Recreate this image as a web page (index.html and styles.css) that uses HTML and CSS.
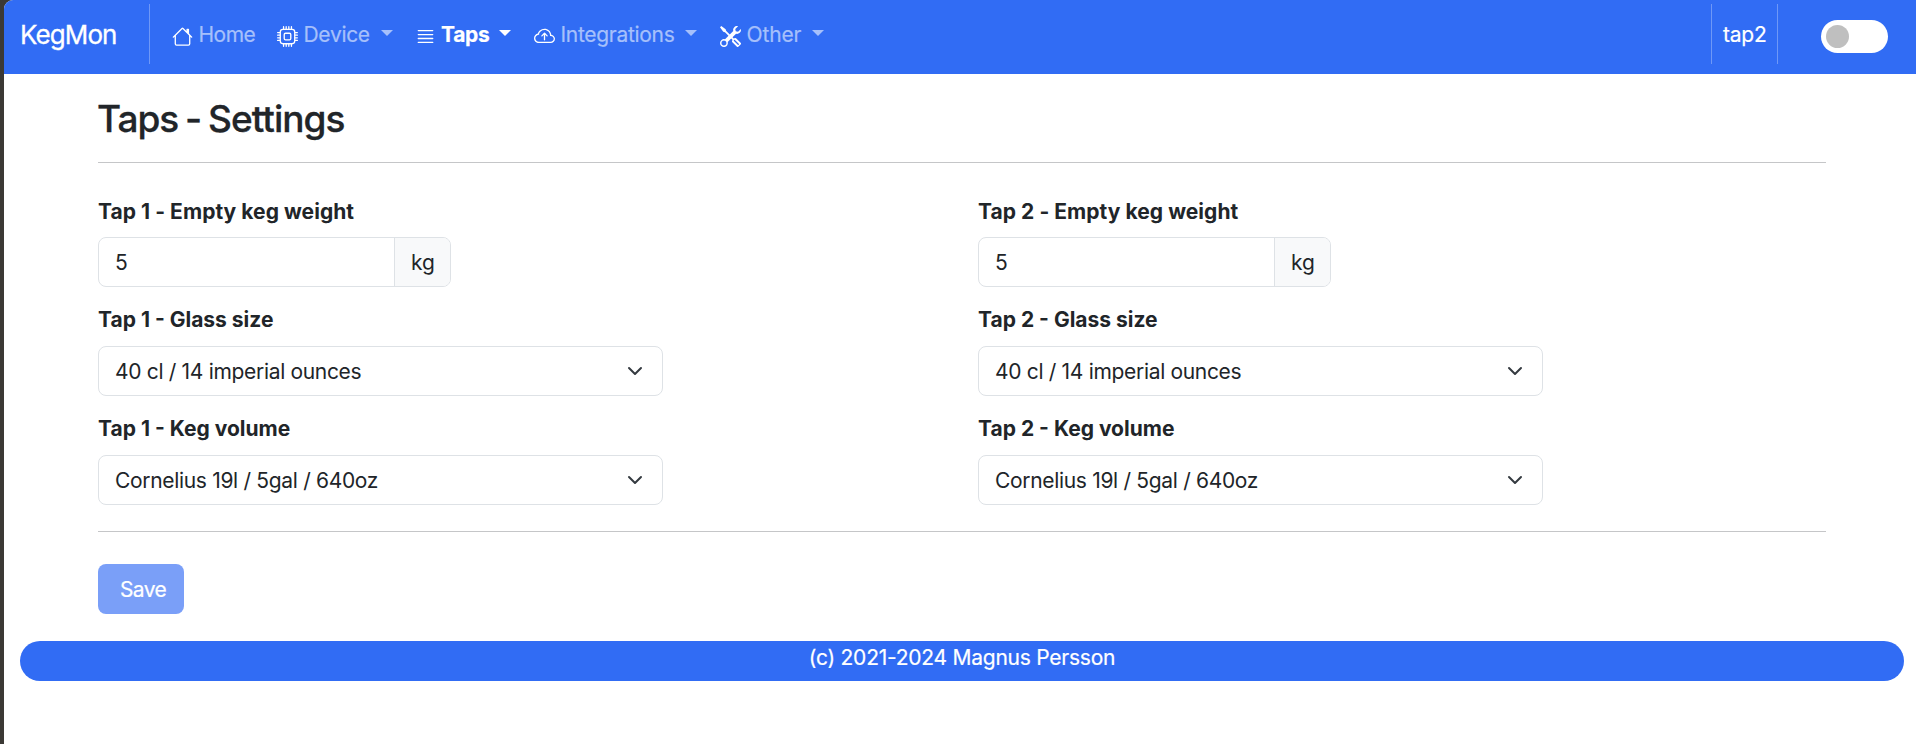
FILE: index.html
```html
<!DOCTYPE html>
<html lang="en">
<head>
<meta charset="utf-8">
<title>KegMon</title>
<link rel="stylesheet" href="styles.css">
</head>
<body>
<div class="page">
  <nav class="navbar">
    <a class="brand">KegMon</a>
    <div class="rule"></div>
    <a class="link home">
      <svg class="icon" viewBox="0 0 16 16"><path d="M8.707 1.5a1 1 0 0 0-1.414 0L.646 8.146a.5.5 0 0 0 .708.708L2 8.207V13.5A1.5 1.5 0 0 0 3.5 15h9a1.5 1.5 0 0 0 1.5-1.5V8.207l.646.647a.5.5 0 0 0 .708-.708L13 5.793V2.5a.5.5 0 0 0-.5-.5h-1a.5.5 0 0 0-.5.5v1.293zM13 7.207V13.5a.5.5 0 0 1-.5.5h-9a.5.5 0 0 1-.5-.5V7.207l5-5z"/></svg>
      <span class="text">Home</span>
    </a>
    <a class="link device">
      <svg class="icon" viewBox="0 0 16 16"><path d="M5 0a.5.5 0 0 1 .5.5V2h1V.5a.5.5 0 0 1 1 0V2h1V.5a.5.5 0 0 1 1 0V2h1V.5a.5.5 0 0 1 1 0V2A2.5 2.5 0 0 1 14 4.5h1.5a.5.5 0 0 1 0 1H14v1h1.5a.5.5 0 0 1 0 1H14v1h1.5a.5.5 0 0 1 0 1H14v1h1.5a.5.5 0 0 1 0 1H14a2.5 2.5 0 0 1-2.5 2.5v1.5a.5.5 0 0 1-1 0V14h-1v1.5a.5.5 0 0 1-1 0V14h-1v1.5a.5.5 0 0 1-1 0V14h-1v1.5a.5.5 0 0 1-1 0V14A2.5 2.5 0 0 1 2 11.5H.5a.5.5 0 0 1 0-1H2v-1H.5a.5.5 0 0 1 0-1H2v-1H.5a.5.5 0 0 1 0-1H2v-1H.5a.5.5 0 0 1 0-1H2A2.5 2.5 0 0 1 4.5 2V.5A.5.5 0 0 1 5 0m-.5 3A1.5 1.5 0 0 0 3 4.5v7A1.5 1.5 0 0 0 4.5 13h7a1.5 1.5 0 0 0 1.5-1.5v-7A1.5 1.5 0 0 0 11.5 3zM5 6.5A1.5 1.5 0 0 1 6.5 5h3A1.5 1.5 0 0 1 11 6.5v3A1.5 1.5 0 0 1 9.5 11h-3A1.5 1.5 0 0 1 5 9.500zM6.500 6a.5.5 0 0 0-.5.5v3a.5.5 0 0 0 .5.5h3a.5.5 0 0 0 .5-.5v-3a.5.5 0 0 0-.5-.5z"/></svg>
      <span class="text">Device</span><i class="caret"></i>
    </a>
    <a class="link taps active">
      <svg class="icon" viewBox="0 0 16 16"><path d="M2 12.5a.5.5 0 0 1 .5-.5h11a.5.5 0 0 1 0 1h-11a.5.5 0 0 1-.5-.5m0-3a.5.5 0 0 1 .5-.5h11a.5.5 0 0 1 0 1h-11a.5.5 0 0 1-.5-.5m0-3a.5.5 0 0 1 .5-.5h11a.5.5 0 0 1 0 1h-11a.5.5 0 0 1-.5-.5m0-3a.5.5 0 0 1 .5-.5h11a.5.5 0 0 1 0 1h-11a.5.5 0 0 1-.5-.5"/></svg>
      <span class="text">Taps</span><i class="caret"></i>
    </a>
    <a class="link integrations">
      <svg class="icon" viewBox="0 0 16 16"><path fill-rule="evenodd" d="M7.646 5.146a.5.5 0 0 1 .708 0l2 2a.5.5 0 0 1-.708.708L8.500 6.707V10.500a.5.5 0 0 1-1 0V6.707L6.354 7.854a.5.5 0 1 1-.708-.708z"/><path d="M4.406 3.342A5.530 5.530 0 0 1 8 2c2.690 0 4.923 2 5.166 4.579C14.758 6.804 16 8.137 16 9.773 16 11.569 14.502 13 12.687 13H3.781C1.708 13 0 11.366 0 9.318c0-1.763 1.266-3.223 2.942-3.593.143-.863.698-1.723 1.464-2.383m.653.757c-.757.653-1.153 1.440-1.153 2.056v.448l-.445.049C2.064 6.805 1 7.952 1 9.318 1 10.785 2.230 12 3.781 12h8.906C13.980 12 15 10.988 15 9.773c0-1.216-1.020-2.228-2.313-2.228h-.5v-.5C12.188 4.825 10.328 3 8 3a4.530 4.530 0 0 0-2.941 1.100z"/></svg>
      <span class="text">Integrations</span><i class="caret"></i>
    </a>
    <a class="link other">
      <svg class="icon" viewBox="0 0 16 16"><path d="M1 0 0 1l2.200 3.081a1 1 0 0 0 .815.419h.07a1 1 0 0 1 .708.293l2.675 2.675-2.617 2.654A3.003 3.003 0 0 0 0 13a3 3 0 1 0 5.878-.851l2.654-2.617.968.968-.305.914a1 1 0 0 0 .242 1.023l3.270 3.270a.997.997 0 0 0 1.414 0l1.586-1.586a.997.997 0 0 0 0-1.414l-3.270-3.270a1 1 0 0 0-1.023-.242L10.500 9.500l-.96-.96 2.680-2.643A3.005 3.005 0 0 0 16 3q0-.405-.102-.777l-2.140 2.141L12 4l-.364-1.757L13.777.102a3 3 0 0 0-3.675 3.680L7.462 6.460 4.793 3.793a1 1 0 0 1-.293-.707v-.071a1 1 0 0 0-.419-.814zm9.646 10.646a.5.5 0 0 1 .708 0l2.914 2.915a.5.5 0 0 1-.707.707l-2.915-2.914a.5.5 0 0 1 0-.708M3 11l.471.242.529.026.287.445.445.287.026.529L5 13l-.242.471-.026.529-.445.287-.287.445-.529.026L3 15l-.471-.242L2 14.732l-.287-.445L1.268 14l-.026-.529L1 13l.242-.471.026-.529.445-.287.287-.445.529-.026z"/></svg>
      <span class="text">Other</span><i class="caret"></i>
    </a>
    <div class="device-name">tap2</div>
    <div class="switch"><div class="knob"></div></div>
  </nav>

  <main class="content">
    <h1 class="title">Taps - Settings</h1>
    <div class="hr"></div>
    <form class="columns">
      <section class="column">
        <label class="label weight-label">Tap 1 - Empty keg weight</label>
        <div class="group"><div class="input">5</div><div class="unit">kg</div></div>
        <label class="label">Tap 1 - Glass size</label>
        <div class="select">40 cl / 14 imperial ounces<svg class="chevron" viewBox="0 0 16 16"><path d="m2 5 6 6 6-6"/></svg></div>
        <label class="label">Tap 1 - Keg volume</label>
        <div class="select">Cornelius 19l / 5gal / 640oz<svg class="chevron" viewBox="0 0 16 16"><path d="m2 5 6 6 6-6"/></svg></div>
      </section>
      <section class="column">
        <label class="label weight-label">Tap 2 - Empty keg weight</label>
        <div class="group"><div class="input">5</div><div class="unit">kg</div></div>
        <label class="label">Tap 2 - Glass size</label>
        <div class="select">40 cl / 14 imperial ounces<svg class="chevron" viewBox="0 0 16 16"><path d="m2 5 6 6 6-6"/></svg></div>
        <label class="label">Tap 2 - Keg volume</label>
        <div class="select">Cornelius 19l / 5gal / 640oz<svg class="chevron" viewBox="0 0 16 16"><path d="m2 5 6 6 6-6"/></svg></div>
      </section>
    </form>
    <div class="hr"></div>
    <div class="save">Save</div>
  </main>
  <footer class="footer">(c) 2021-2024 Magnus Persson</footer>
</div>
</body>
</html>
```
FILE: styles.css
```css
* { box-sizing: border-box; }
body {
  margin: 0;
  background: #3b3935;
  color: #212529;
  font: 400 21px/32px Inter, "Liberation Sans", sans-serif;
  white-space: nowrap;
}
.page {
  height: 744px;
  margin-left: 4px;
  background: #fff;
  border-top-left-radius: 9px;
  overflow: hidden;
}
.navbar {
  display: flex;
  align-items: flex-start;
  height: 74px;
  padding: 4px 28px 0 16px;
  background: #316cf4;
  color: #fff;
}
.brand { width: 129px; padding-top: 15px; font-size: 26px; letter-spacing: -0.9px; -webkit-text-stroke: 0.3px; }
.rule { width: 1px; height: 60px; background: #6f98f7; }
.link { display: flex; align-items: center; padding-top: 15px; color: #a6c0fb; letter-spacing: -0.3px; -webkit-text-stroke: 0.2px; }
.icon { flex: none; width: 21px; height: 21px; margin-top: 2px; fill: #fff; }
.text { margin-left: 5.5px; }
.home { width: 105px; margin-left: 22px; letter-spacing: -0.5px; }
.device { width: 138px; }
.taps { width: 119px; }
.integrations { width: 186px; }
.other { letter-spacing: -0.15px; }
.active { color: #fff; font-weight: 700; }
.active .text { margin-left: 5px; }
.active .caret { margin-left: 10px; }
.caret {
  width: 0;
  height: 0;
  margin: -4px 0 0 11px;
  border: 6px solid transparent;
  border-top-color: currentColor;
  border-bottom: 0;
}
.device-name {
  width: 67px;
  height: 60px;
  margin-left: auto;
  padding: 15px 0 0 11px;
  border: solid #6f98f7;
  border-width: 0 1px;
  letter-spacing: -0.2px;
  -webkit-text-stroke: 0.2px;
}
.switch {
  width: 67px;
  height: 33px;
  margin: 16px 0 0 43px;
  padding: 5px;
  border-radius: 17px;
  background: #fff;
}
.knob { width: 23px; height: 23px; border-radius: 50%; background: #bfbfbf; }
.content { padding: 19px 90px 0 94px; }
.title {
  margin: 0 0 18px -1px;
  font-size: 37px;
  font-weight: 500;
  line-height: 51px;
  letter-spacing: -1px;
  word-spacing: -2px;
  -webkit-text-stroke: 0.3px;
}
.hr { height: 1px; background: #c5c6c8; }
.columns { display: grid; grid-template-columns: 880px 1fr; padding: 32px 0 26px; }
.column { display: flex; flex-direction: column; }
.label { height: 42px; margin-top: 17px; font-weight: 700; }
.weight-label { margin-top: 0; padding-top: 1px; letter-spacing: 0.05px; }
.group { display: flex; width: 353px; height: 50px; border: 1px solid #dee2e6; border-radius: 8px; overflow: hidden; }
.input { flex: none; width: 295px; padding: 9px 16px; }
.unit { flex: 1; padding: 9px 16px; border-left: 1px solid #dee2e6; background: #f8f9fa; }
.select {
  display: flex;
  align-items: center;
  justify-content: space-between;
  width: 565px;
  height: 50px;
  padding: 1px 19px 0 16px;
  border: 1px solid #dee2e6;
  border-radius: 8px;
  letter-spacing: -0.32px;
}
.chevron { width: 16px; height: 16px; margin-top: -1px; fill: none; stroke: #343a40; stroke-width: 2; stroke-linecap: round; stroke-linejoin: round; }
.save {
  width: 86px;
  height: 50px;
  margin-top: 32px;
  padding: 10px 0 0 22px;
  border-radius: 8px;
  background: #7a9ff8;
  color: #fff;
  letter-spacing: -0.6px;
  -webkit-text-stroke: 0.2px;
}
.footer {
  height: 40px;
  margin: 27px 12px 0 16px;
  padding-top: 1px;
  border-radius: 20px;
  background: #316cf4;
  color: #fff;
  text-align: center;
  letter-spacing: -0.24px;
  -webkit-text-stroke: 0.2px;
}
```
